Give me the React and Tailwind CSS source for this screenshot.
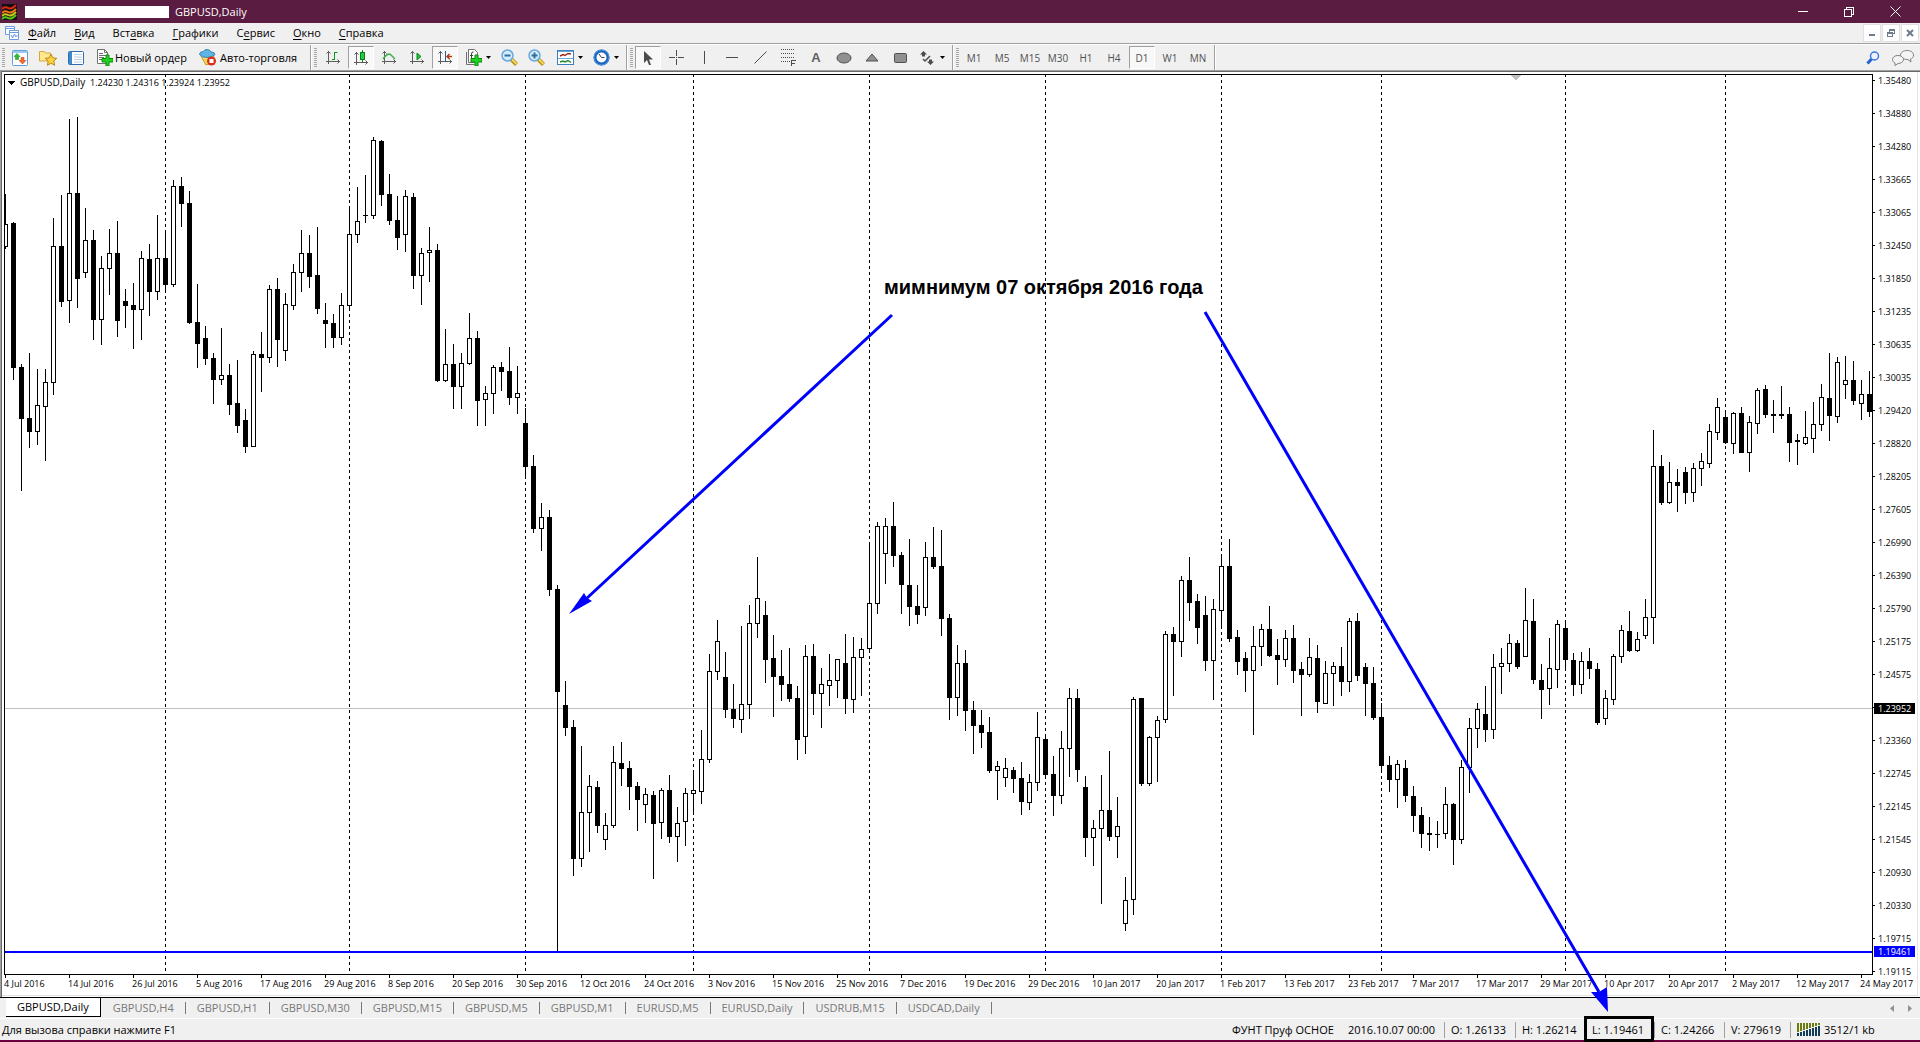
const priceLabels = [
  "1.35480", "1.34880", "1.34280", "1.33665", "1.33065", "1.32450", "1.31850",
  "1.31235", "1.30635", "1.30035", "1.29420", "1.28820", "1.28205", "1.27605",
  "1.26990", "1.26390", "1.25790", "1.25175", "1.24575", null, "1.23360",
  "1.22745", "1.22145", "1.21545", "1.20930", "1.20330", "1.19715", "1.19115",
];

const timeLabels = [
  "4 Jul 2016", "14 Jul 2016", "26 Jul 2016", "5 Aug 2016", "17 Aug 2016",
  "29 Aug 2016", "8 Sep 2016", "20 Sep 2016", "30 Sep 2016", "12 Oct 2016",
  "24 Oct 2016", "3 Nov 2016", "15 Nov 2016", "25 Nov 2016", "7 Dec 2016",
  "19 Dec 2016", "29 Dec 2016", "10 Jan 2017", "20 Jan 2017", "1 Feb 2017",
  "13 Feb 2017", "23 Feb 2017", "7 Mar 2017", "17 Mar 2017", "29 Mar 2017",
  "10 Apr 2017", "20 Apr 2017", "2 May 2017", "12 May 2017", "24 May 2017",
];

const separators = [165, 349, 525, 693, 869, 1045, 1221, 1381, 1565, 1725];

// high, body top, body bottom, low, 1 = bearish
const candles = [
  [194, 224, 247, 249, 0], [222, 223, 368, 380, 1], [364, 367, 419, 491, 1], [353, 418, 432, 448, 1],
  [369, 405, 432, 445, 0], [369, 382, 407, 461, 0], [218, 246, 383, 395, 0], [195, 246, 302, 307, 1],
  [119, 193, 301, 323, 0], [117, 193, 279, 308, 1], [208, 240, 273, 278, 0], [230, 240, 320, 340, 1],
  [256, 268, 320, 345, 0], [229, 253, 269, 295, 0], [221, 253, 321, 337, 1], [289, 301, 306, 328, 1],
  [283, 305, 310, 349, 1], [251, 258, 310, 340, 0], [244, 259, 292, 316, 1], [215, 258, 292, 300, 0],
  [230, 258, 285, 291, 1], [180, 186, 285, 287, 0], [177, 186, 204, 227, 1], [191, 203, 323, 324, 1],
  [284, 322, 344, 368, 1], [326, 338, 359, 365, 1], [353, 358, 380, 404, 1], [328, 375, 380, 385, 0],
  [364, 375, 405, 415, 1], [360, 403, 426, 433, 1], [409, 420, 447, 453, 1], [351, 354, 447, 447, 0],
  [332, 354, 358, 392, 1], [285, 289, 358, 363, 0], [278, 289, 340, 367, 1], [293, 304, 351, 361, 0],
  [264, 272, 306, 310, 0], [230, 253, 273, 292, 0], [235, 253, 277, 288, 1], [227, 275, 309, 314, 1],
  [303, 320, 324, 348, 1], [314, 323, 338, 348, 1], [293, 305, 338, 345, 0], [206, 234, 306, 311, 0],
  [187, 221, 235, 243, 0], [175, 215, 216, 223, 1], [137, 140, 216, 219, 0], [140, 141, 195, 206, 1],
  [174, 194, 221, 225, 1], [196, 220, 238, 250, 1], [190, 196, 235, 252, 0], [193, 197, 276, 289, 1],
  [248, 253, 276, 305, 0], [227, 250, 253, 282, 0], [244, 250, 381, 382, 1], [329, 364, 381, 382, 0],
  [344, 364, 387, 409, 1], [353, 363, 387, 409, 0], [313, 338, 364, 365, 0], [331, 338, 401, 426, 1],
  [386, 393, 400, 426, 0], [365, 367, 394, 414, 0], [362, 367, 372, 391, 1], [347, 371, 398, 405, 1],
  [366, 393, 398, 414, 0], [408, 423, 467, 479, 1], [455, 466, 529, 533, 1], [503, 517, 529, 551, 0],
  [510, 517, 590, 596, 1], [585, 589, 692, 951, 1], [681, 705, 728, 736, 1], [720, 727, 859, 876, 1],
  [746, 812, 859, 867, 0], [775, 786, 813, 852, 0], [781, 787, 826, 833, 1], [813, 825, 840, 850, 0],
  [746, 762, 826, 828, 0], [742, 763, 769, 786, 1], [761, 768, 787, 810, 1], [782, 786, 800, 831, 1],
  [788, 794, 805, 823, 0], [791, 795, 824, 879, 1], [788, 790, 823, 839, 0], [775, 790, 837, 843, 1],
  [807, 823, 837, 862, 0], [788, 793, 822, 846, 0], [771, 790, 794, 815, 0], [730, 759, 792, 804, 0],
  [654, 671, 760, 763, 0], [620, 641, 672, 680, 0], [652, 677, 710, 718, 1], [684, 709, 719, 728, 1],
  [626, 704, 720, 733, 0], [605, 623, 705, 719, 0], [557, 598, 624, 638, 0], [601, 615, 660, 683, 1],
  [635, 658, 677, 717, 1], [650, 676, 685, 701, 1], [648, 684, 699, 702, 1], [686, 698, 740, 760, 1],
  [645, 656, 737, 754, 0], [644, 656, 694, 715, 1], [668, 684, 694, 728, 0], [654, 680, 686, 706, 0],
  [659, 659, 681, 698, 0], [634, 663, 699, 714, 1], [637, 657, 700, 713, 0], [638, 649, 658, 696, 0],
  [542, 603, 649, 652, 0], [522, 526, 604, 614, 0], [518, 526, 554, 584, 0], [502, 526, 556, 567, 1],
  [552, 555, 585, 614, 1], [539, 585, 607, 626, 1], [585, 606, 615, 624, 1], [542, 557, 608, 616, 0],
  [527, 557, 567, 569, 1], [530, 566, 619, 636, 1], [614, 618, 698, 720, 1], [645, 663, 698, 716, 0],
  [650, 663, 711, 731, 1], [701, 710, 726, 754, 1], [710, 725, 733, 748, 1], [717, 732, 771, 773, 1],
  [761, 766, 771, 800, 0], [758, 768, 778, 787, 0], [767, 770, 779, 793, 1], [762, 778, 802, 815, 1],
  [774, 782, 803, 810, 0], [712, 737, 783, 791, 0], [735, 739, 775, 778, 1], [756, 774, 796, 816, 1],
  [731, 748, 796, 804, 0], [688, 698, 749, 777, 0], [689, 698, 770, 782, 1], [776, 787, 838, 857, 1],
  [820, 828, 838, 866, 0], [775, 810, 829, 904, 0], [751, 810, 837, 841, 1], [797, 826, 837, 858, 0],
  [877, 900, 924, 931, 0], [697, 699, 900, 915, 0], [698, 698, 784, 786, 1], [736, 737, 784, 786, 0],
  [716, 720, 738, 782, 0], [631, 634, 720, 723, 0], [627, 634, 642, 696, 1], [576, 580, 642, 657, 0],
  [557, 580, 603, 621, 1], [594, 601, 628, 644, 1], [596, 615, 661, 671, 1], [599, 609, 661, 700, 0],
  [554, 566, 611, 628, 0], [539, 566, 639, 642, 1], [630, 637, 662, 675, 1], [652, 658, 671, 692, 1],
  [626, 646, 671, 735, 0], [624, 629, 647, 666, 0], [606, 629, 656, 657, 1], [639, 655, 660, 685, 1],
  [630, 638, 660, 667, 0], [625, 638, 671, 683, 1], [662, 669, 675, 716, 1], [638, 657, 675, 677, 0],
  [645, 658, 702, 713, 1], [661, 673, 704, 704, 0], [662, 666, 674, 706, 0], [647, 666, 682, 696, 1],
  [618, 621, 682, 692, 0], [613, 621, 676, 681, 1], [663, 667, 684, 716, 1], [667, 683, 718, 720, 1],
  [703, 717, 766, 772, 1], [756, 765, 780, 792, 1], [760, 764, 780, 808, 0], [760, 768, 796, 802, 1],
  [786, 796, 816, 832, 1], [807, 815, 834, 848, 1], [817, 833, 835, 851, 1], [821, 834, 835, 848, 1],
  [787, 804, 834, 839, 0], [803, 804, 840, 865, 1], [760, 767, 840, 844, 0], [718, 728, 768, 793, 0],
  [703, 709, 729, 748, 0], [686, 714, 730, 742, 1], [654, 667, 730, 739, 0], [648, 663, 667, 694, 0],
  [634, 643, 664, 672, 0], [640, 643, 667, 669, 1], [588, 620, 657, 657, 0], [599, 621, 680, 684, 1],
  [664, 680, 690, 719, 1], [638, 668, 689, 705, 0], [620, 624, 670, 688, 0], [621, 628, 660, 670, 1],
  [653, 660, 685, 696, 1], [652, 661, 685, 694, 0], [648, 661, 669, 679, 1], [663, 669, 723, 725, 1],
  [690, 698, 719, 725, 0], [654, 656, 700, 705, 0], [625, 630, 657, 663, 0], [611, 631, 651, 652, 1],
  [632, 639, 651, 652, 0], [599, 617, 636, 639, 0], [430, 466, 618, 644, 0], [455, 466, 503, 505, 1],
  [462, 482, 503, 504, 0], [469, 482, 486, 512, 1], [467, 472, 493, 504, 1], [463, 468, 493, 502, 0],
  [453, 461, 469, 486, 0], [424, 431, 464, 468, 0], [398, 407, 433, 440, 0], [411, 417, 443, 444, 1],
  [412, 413, 444, 454, 0], [407, 413, 453, 453, 1], [416, 422, 453, 472, 0], [388, 390, 424, 434, 0],
  [385, 389, 415, 418, 1], [400, 414, 416, 433, 1], [386, 414, 416, 419, 1], [407, 414, 443, 462, 1],
  [434, 440, 442, 465, 1], [411, 437, 444, 445, 0], [402, 424, 439, 453, 0], [384, 397, 425, 431, 0],
  [353, 398, 416, 441, 1], [357, 362, 417, 423, 0], [356, 380, 385, 399, 0], [361, 380, 401, 405, 1],
  [380, 394, 404, 420, 0], [371, 394, 412, 417, 1],
];

function Candle({ x, data }) {
  const [high, top, bottom, low, down] = data;
  return (
    <g>
      <rect x={x} y={high} width="1" height={low - high} fill="#000" />
      <rect x={x - 2} y={top} width="5" height={bottom - top} fill="#000" />
      {!down && (
        <rect x={x - 1} y={top + 1} width="3" height={bottom - top - 2} fill="#fff" />
      )}
    </g>
  );
}

function Chart() {
  return (
    <svg
      viewBox="2 72 1918 925"
      className="block w-full bg-white font-['Open_Sans',sans-serif] text-[9px]"
      role="img"
      aria-label="GBPUSD,Daily"
    >
      <defs>
        <clipPath id="plot">
          <rect x="5" y="75" width="1867" height="899" />
        </clipPath>
      </defs>
      <g shapeRendering="crispEdges">
        <rect x="1917" y="72" width="1" height="924" fill="#e3e3e3" />
        <rect x="2" y="995" width="1916" height="1" fill="#e3e3e3" />
        <g clipPath="url(#plot)">
          {separators.map((x) => (
            <line key={x} x1={x + 0.5} x2={x + 0.5} y1="74" y2="974" stroke="#000" strokeDasharray="3 3" />
          ))}
          <rect x="5" y="708" width="1867" height="1" fill="#c0c0c0" />
          {candles.map((c, i) => (
            <Candle key={i} x={5 + i * 8} data={c} />
          ))}
          <rect x="5" y="951" width="1867" height="2" fill="#0000ff" />
        </g>
        <path d="M4 74h1869v901H4zM5 75v899h1867V75z" fillRule="evenodd" fill="#000" />
        {priceLabels.map((p, i) => (
          <rect key={i} x="1873" y={80 + i * 33} width="2" height="1" fill="#000" />
        ))}
        {timeLabels.map((t, i) => (
          <rect key={t} x={5 + i * 64} y="975" width="1" height="3" fill="#000" />
        ))}
        <path d="M1510 75h11l-5 5h-1z" fill="#c0c0c0" />
        <path d="M8 81h7l-3 4h-1z" fill="#000" />
        <rect x="1874" y="703" width="41" height="11" fill="#000" />
        <rect x="1874" y="946" width="41" height="11" fill="#0000ff" />
      </g>
      <text x="20" y="86" className="text-[10px]">GBPUSD,Daily</text>
      <text x="90" y="86">1.24230 1.24316 1.23924 1.23952</text>
      {priceLabels.map(
        (p, i) =>
          p && (
            <text key={p} x="1878" y={84 + i * 33}>
              {p}
            </text>
          )
      )}
      {timeLabels.map((t, i) => (
        <text key={t} x={4 + i * 64} y="987">
          {t}
        </text>
      ))}
      <text x="1878" y="712" fill="#fff">1.23952</text>
      <text x="1878" y="955" fill="#fff">1.19461</text>
      <text
        x="884"
        y="294"
        className="font-['Liberation_Sans',sans-serif] text-[20px] font-bold"
      >
        мимнимум 07 октября 2016 года
      </text>
    </svg>
  );
}

function Arrows() {
  return (
    <svg
      viewBox="0 0 1920 1042"
      className="absolute top-0 left-0 w-full pointer-events-none z-10"
      fill="#0000ff"
      stroke="#0000ff"
    >
      <path d="M892 315L586 599M1205 312L1599 992" strokeWidth="3" fill="none" />
      <path d="M569 614L584 593L587 598L592 601Z" stroke="none" />
      <path d="M1608 1012L1591 992L1599 992L1607 987Z" stroke="none" />
    </svg>
  );
}

function TitleBar() {
  return (
    <header className="flex items-center h-[23px] pr-0.5 bg-[#5a1c40] text-white">
      <svg width="15" height="16" viewBox="0 0 15 16" className="ml-0.5">
        <rect width="15" height="16" fill="#111" />
        <g fill="none" strokeWidth="2">
          <path d="M0 5q3-3 6-1t8-3" stroke="#e02a10" />
          <path d="M0 9q3-3 6-1t8-3" stroke="#f07818" />
          <path d="M0 12q3-3 6-1t8-3" stroke="#c8c820" />
          <path d="M0 15q3-3 6-1t8-3" stroke="#58c818" />
        </g>
      </svg>
      <div className="w-36 h-3 ml-2 bg-white" />
      <h1 className="ml-1.5">GBPUSD,Daily</h1>
      <div className="flex ml-auto h-full">
        <button aria-label="Minimize" className="w-[46px] flex items-center justify-center">
          <svg width="10" height="10" shapeRendering="crispEdges">
            <path d="M0 4.500h10" stroke="#fff" />
          </svg>
        </button>
        <button aria-label="Restore" className="w-[46px] flex items-center justify-center">
          <svg width="10" height="10" fill="none" stroke="#fff" shapeRendering="crispEdges">
            <path d="M0.500 2.500h7v7h-7zM2.500 2.500v-2h7v7h-2" />
          </svg>
        </button>
        <button aria-label="Close" className="w-[46px] flex items-center justify-center">
          <svg width="11" height="11" stroke="#fff">
            <path d="M0.500 0.500l10 10M10.500 0.500l-10 10" />
          </svg>
        </button>
      </div>
    </header>
  );
}

const menuItems = [
  ["", "Ф", "айл"],
  ["", "В", "ид"],
  ["Вст", "а", "вка"],
  ["", "Г", "рафики"],
  ["С", "е", "рвис"],
  ["", "О", "кно"],
  ["", "С", "правка"],
];

function MenuBar() {
  return (
    <nav className="flex items-center h-5 text-black">
      <svg width="14" height="14" viewBox="0 0 14 14" className="ml-[5px]" fill="#fff" stroke="#6b9be0">
        <path d="M0.500 0.500h9v8h-9zM0.500 2.500h9" />
        <path d="M4.500 4.500h9v9h-9zM4.500 6.500h9M6 9l1.500 3l2-4l1.500 3l1.500-2" />
      </svg>
      {menuItems.map(([a, key, b]) => (
        <button key={b} className="px-[9px]">
          {a}
          <u className="underline-offset-2">{key}</u>
          {b}
        </button>
      ))}
      <div className="flex ml-auto gap-px pr-px">
        <button aria-label="Minimize chart" className="w-[18px] h-[18px] bg-white border border-[#e0e0e0] flex items-center justify-center">
          <svg width="8" height="8"><path d="M1 5h6v2H1z" fill="#6d7b8c" /></svg>
        </button>
        <button aria-label="Restore chart" className="w-[18px] h-[18px] bg-white border border-[#e0e0e0] flex items-center justify-center">
          <svg width="8" height="8" fill="none" stroke="#6d7b8c" shapeRendering="crispEdges">
            <path d="M0.500 4.500h5v3h-5zM0 3.500h6M2.500 3v-2.500h5v4h-2M2 1.500h6" />
          </svg>
        </button>
        <button aria-label="Close chart" className="w-[18px] h-[18px] bg-white border border-[#e0e0e0] flex items-center justify-center">
          <svg width="8" height="8" stroke="#6d7b8c" strokeWidth="2"><path d="M1 1l6 6M7 1l-6 6" /></svg>
        </button>
      </div>
    </nav>
  );
}

function Grip() {
  return (
    <svg width="3" height="20" className="shrink-0" shapeRendering="crispEdges">
      <path d="M1.500 0v20" stroke="#a8a8a8" strokeWidth="3" strokeDasharray="1 1" />
    </svg>
  );
}

function Divider() {
  return <div className="w-0.5 h-full shrink-0 border-l border-[#a0a0a0] bg-white" />;
}

function DropArrow() {
  return (
    <svg width="5" height="3" className="shrink-0">
      <path d="M0 0h5l-2.500 3z" fill="#000" />
    </svg>
  );
}

function ToolButton({ label, pressed, children }) {
  return (
    <button
      aria-label={label}
      className={`w-[26px] h-[23px] mx-px shrink-0 flex items-center justify-center border ${
        pressed
          ? "bg-[#f8f8f8] border-t-[#a0a0a0] border-l-[#a0a0a0] border-b-white border-r-white"
          : "border-transparent"
      }`}
    >
      {children}
    </button>
  );
}

const axes = "M2.500 0v13M0 10.500h14M0.500 2.500l2-2l2 2M11.500 8.500l2 2l-2 2";

function AxesIcon({ children }) {
  return (
    <svg width="14" height="14" viewBox="0 0 14 14" fill="none">
      <path d={axes} stroke="#5c5c5c" />
      {children}
    </svg>
  );
}

function PlusSign() {
  return (
    <path d="M10 6h3v3.500h4v3.500h-4v4h-3v-4H6V9.500h4z" fill="#1fd41f" stroke="#0a8a0a" />
  );
}

function Lens({ plus }) {
  return (
    <svg width="17" height="17" viewBox="0 0 17 17" fill="none">
      <path d="M10 10l5.500 5.500" stroke="#b88a10" strokeWidth="4" />
      <path d="M10.500 10l5 5" stroke="#f5d860" strokeWidth="2" />
      <circle cx="6.500" cy="6.500" r="5.500" fill="#d4ebfb" stroke="#68a8dc" strokeWidth="1.500" />
      <path d={plus ? "M3.500 6.500h6M6.500 3.500v6" : "M3.500 6.500h6"} stroke="#2f6f9f" strokeWidth="2" />
    </svg>
  );
}

function StandardTools() {
  return (
    <>
      <button aria-label="Обзор рынка" className="ml-[7px] shrink-0">
        <svg width="16" height="16" viewBox="0 0 16 16">
          <rect x="0.500" y="0.500" width="15" height="15" rx="1" fill="#fff" stroke="#5ba0dc" />
          <path d="M1 2h14" stroke="#9cc8ee" strokeWidth="2" />
          <path d="M5 3.500l3 3H6.500v3h-3v-3H2z" fill="#2fc02f" stroke="#128012" strokeWidth="0.500" />
          <path d="M10.500 14l-3.500-3.500h2v-3h3v3h2z" fill="#f07030" stroke="#c03010" strokeWidth="0.500" />
        </svg>
      </button>
      <button aria-label="Навигатор" className="ml-[11px] shrink-0">
        <svg width="18" height="16" viewBox="0 0 18 16">
          <path d="M0.500 1.500h5l1 1.500h5v8h-11z" fill="#ffe890" stroke="#d8a838" />
          <path d="M12 4l1.800 3.800l4 .5l-3 2.800l.8 4.200l-3.600-2l-3.600 2l.8-4.200l-3-2.800l4-.5z" fill="#fcd040" stroke="#b88818" />
        </svg>
      </button>
      <button aria-label="Терминал" className="ml-[11px] shrink-0">
        <svg width="16" height="14" viewBox="0 0 16 14">
          <rect x="0.500" y="0.500" width="15" height="13" rx="1" fill="#fff" stroke="#2f6cb0" />
          <rect x="1" y="1" width="3" height="12" fill="#4088d0" />
          <path d="M6 3.500h8M6 6h8M6 8.500h8M6 11h8" stroke="#b8d0e8" />
        </svg>
      </button>
      <button className="ml-3 flex items-center gap-0.5 shrink-0">
        <svg width="17" height="17" viewBox="0 0 17 17">
          <path d="M1.500 0.500h7l3 3v11h-10z" fill="#fff" stroke="#707070" />
          <path d="M8.500 0.500v3h3M3 4.500h4M3 6.500h7M3 8.500h5M3 10.500h3" stroke="#707070" fill="none" />
          <PlusSign />
        </svg>
        Новый ордер
      </button>
      <button className="ml-3 flex items-center gap-1 shrink-0">
        <svg width="17" height="17" viewBox="0 0 17 17">
          <path d="M2 7l6-2l7 2l-3 7l-5 2z" fill="#f8d858" stroke="#c09828" />
          <path d="M0.500 5.500q0-3 4-3q1-2.500 4-2t3.500 2.500q4 0 4 2.500q-3 3-8 3t-7.500-3z" fill="#60b4e4" stroke="#3484b8" />
          <circle cx="12.500" cy="12" r="4.500" fill="#d83018" />
          <rect x="10.500" y="10" width="4" height="4" fill="#fff" />
        </svg>
        Авто-торговля
      </button>
    </>
  );
}

function ChartTools() {
  return (
    <>
      <ToolButton label="Бары">
        <AxesIcon><path d="M8.500 1v7M8.500 1.500h3M6 8.500h3" stroke="#0a9a1a" /></AxesIcon>
      </ToolButton>
      <ToolButton label="Свечи" pressed>
        <svg width="14" height="16" viewBox="0 0 14 16" fill="none">
          <path d="M2.500 2v13M0 12.500h14M0.500 4.500l2-2l2 2M11.500 10.500l2 2l-2 2" stroke="#5c5c5c" />
          <path d="M8.500 0v12" stroke="#0a7a1a" />
          <rect x="6.500" y="2.500" width="4" height="7" fill="#1fd03f" stroke="#0a7a1a" />
        </svg>
      </ToolButton>
      <ToolButton label="Линия">
        <AxesIcon><path d="M1 8q5-7 8-4l4 4" stroke="#3cae4c" strokeWidth="1.500" /></AxesIcon>
      </ToolButton>
      <ToolButton label="Автопрокрутка">
        <AxesIcon><path d="M7 2l4 3.500l-4 3.500z" fill="#1fc03f" stroke="#0a8a1a" /></AxesIcon>
      </ToolButton>
      <ToolButton label="Сдвиг графика" pressed>
        <AxesIcon>
          <path d="M7.500 0v10" stroke="#2060a0" />
          <path d="M9 5.500h5M11.500 3l-2.500 2.500l2.500 2.500" stroke="#b03a10" strokeWidth="1.500" />
        </AxesIcon>
      </ToolButton>
      <button aria-label="Индикаторы" className="ml-1.5 flex items-center gap-1">
        <svg width="17" height="17" viewBox="0 0 17 17">
          <path d="M3.500 0.500h6l3 3v10h-9z" fill="#fff" stroke="#707070" />
          <path d="M1.500 3v12.500h8" fill="none" stroke="#707070" />
          <path d="M8.500 3q-2-.5-2 2v6M5 6.500h3" fill="none" stroke="#404040" />
          <PlusSign />
        </svg>
        <DropArrow />
      </button>
      <button aria-label="Уменьшить" className="ml-2.5"><Lens /></button>
      <button aria-label="Увеличить" className="ml-2.5"><Lens plus /></button>
      <button aria-label="Шаблоны" className="ml-3 flex items-center gap-1">
        <svg width="17" height="15" viewBox="0 0 17 15" fill="none">
          <rect x="0.500" y="0.500" width="16" height="14" fill="#fff" stroke="#3c80c0" />
          <path d="M1 1.500h15M1 8.500h15" stroke="#68a8dc" />
          <path d="M3 6l3-1.500l2 1l3-2l3 .5" stroke="#a02818" strokeWidth="1.500" />
          <path d="M3 12l3-1l2 1l3-1.500l3 2" stroke="#208c30" strokeWidth="1.500" />
        </svg>
        <DropArrow />
      </button>
      <button aria-label="Период" className="ml-2.5 mr-1 flex items-center gap-1">
        <svg width="17" height="17" viewBox="0 0 17 17" fill="none">
          <circle cx="8.500" cy="8.500" r="6.500" fill="#fff" stroke="#1c64c0" strokeWidth="3" />
          <circle cx="8.500" cy="8.500" r="7.500" stroke="#5098e0" />
          <path d="M8.500 8.500l-2.500-3.500M8.500 8.500h3" stroke="#404040" />
        </svg>
        <DropArrow />
      </button>
    </>
  );
}

function LineTools() {
  return (
    <>
      <ToolButton label="Курсор" pressed>
        <svg width="10" height="16" viewBox="0 0 10 16">
          <path d="M1 1v12l3-3l2 5h2l-2-5.500h4z" fill="#4c4c4c" />
        </svg>
      </ToolButton>
      <ToolButton label="Перекрестие">
        <svg width="15" height="15" stroke="#4c4c4c" shapeRendering="crispEdges">
          <path d="M7.500 0v6M7.500 9v6M0 7.500h6M9 7.500h6M7 7.500h1" />
        </svg>
      </ToolButton>
      <ToolButton label="Вертикальная линия">
        <svg width="3" height="13" stroke="#4c4c4c" shapeRendering="crispEdges"><path d="M1.500 0v13" /></svg>
      </ToolButton>
      <ToolButton label="Горизонтальная линия">
        <svg width="12" height="3" stroke="#4c4c4c" shapeRendering="crispEdges"><path d="M0 1.500h12" /></svg>
      </ToolButton>
      <ToolButton label="Трендовая линия">
        <svg width="13" height="13" stroke="#4c4c4c"><path d="M0.500 12.500l12-12" /></svg>
      </ToolButton>
      <ToolButton label="Уровни Фибоначчи">
        <svg width="15" height="17" fill="none" stroke="#4c4c4c" shapeRendering="crispEdges">
          <path d="M0 0.500h14M0 4.500h14M0 8.500h14M0 12.500h9" strokeDasharray="1 1" />
          <path d="M10.500 17v-5.500h4M10 14.500h4" />
        </svg>
      </ToolButton>
      <ToolButton label="Текст">
        <span className="font-['Liberation_Sans',sans-serif] text-[13px] leading-none font-bold text-[#606060]">A</span>
      </ToolButton>
      <ToolButton label="Эллипс">
        <svg width="16" height="12"><ellipse cx="8" cy="6" rx="7" ry="5" fill="#909090" stroke="#505050" /></svg>
      </ToolButton>
      <ToolButton label="Треугольник">
        <svg width="14" height="9"><path d="M7 1l6 7H1z" fill="#909090" stroke="#505050" /></svg>
      </ToolButton>
      <ToolButton label="Прямоугольник">
        <svg width="13" height="10"><rect x="0.500" y="0.500" width="12" height="9" rx="1" fill="#909090" stroke="#505050" /></svg>
      </ToolButton>
      <button aria-label="Стрелки" className="mx-1.5 flex items-center gap-1.5">
        <svg width="14" height="14" viewBox="0 0 14 14">
          <path d="M3.500 0L7 3.500H5v2H2v-2H0zM10.500 14L7 10.500h2v-2h3v2h2z" fill="#4c4c4c" />
          <path d="M3 8l2 2l5-5" fill="none" stroke="#4c4c4c" strokeWidth="1.500" />
        </svg>
        <DropArrow />
      </button>
    </>
  );
}

const periods = ["M1", "M5", "M15", "M30", "H1", "H4", "D1", "W1", "MN"];

function Toolbar() {
  return (
    <div className="flex items-center h-[25px] pl-0.5 text-black">
      <Grip />
      <div className="flex items-center w-[305px] shrink-0">
        <StandardTools />
      </div>
      <Divider />
      <div className="w-0.5" />
      <Grip />
      <div className="flex items-center w-[309px] shrink-0 pl-0.5">
        <ChartTools />
      </div>
      <Divider />
      <div className="w-0.5" />
      <Grip />
      <div className="flex items-center w-[319px] shrink-0 pl-px">
        <LineTools />
      </div>
      <Divider />
      <div className="w-0.5" />
      <Grip />
      <div className="flex items-center w-[255px] shrink-0 pl-px">
        {periods.map((p) => (
          <ToolButton key={p} label={p} pressed={p === "D1"}>
            <span className="text-[10px] leading-none text-[#505050]">{p}</span>
          </ToolButton>
        ))}
      </div>
      <Divider />
      <div className="flex items-center ml-auto gap-3 pr-1.5">
        <button aria-label="Поиск">
          <svg width="14" height="14" fill="none">
            <path d="M5.500 8L1.500 12.500" stroke="#2060d0" strokeWidth="3" />
            <circle cx="8.500" cy="5" r="4" fill="#eef4ff" stroke="#3c78e0" strokeWidth="1.500" />
          </svg>
        </button>
        <button aria-label="Чат">
          <svg width="22" height="16" fill="#f4f4f4" stroke="#808080">
            <path d="M15 0.500c4 0 6.500 2 6.500 4.500s-1.500 3.500-3 4l.500 3l-3-2.500c-5 0-7.500-2-7.500-4.500s3-4.500 6.500-4.500z" />
            <path d="M6 5.500c3 0 5.500 1.500 5.500 4s-3 4-5.500 4l-3 2v-2.500c-1.500-.5-2.500-2-2.500-3.500c0-2.500 2.500-4 5.500-4z" />
          </svg>
        </button>
      </div>
    </div>
  );
}

const tabs = [
  "GBPUSD,Daily", "GBPUSD,H4", "GBPUSD,H1", "GBPUSD,M30", "GBPUSD,M15", "GBPUSD,M5",
  "GBPUSD,M1", "EURUSD,M5", "EURUSD,Daily", "USDRUB,M15", "USDCAD,Daily",
];

function ChartTabs() {
  return (
    <div className="flex items-center h-[21px] pl-1.5 border-t border-black text-[#787878]">
      {tabs.map((t, i) =>
        i === 0 ? (
          <button key={t} className="self-start h-[19px] px-[11px] mr-px bg-white text-black border-r border-b border-black">
            {t}
          </button>
        ) : (
          <button key={t} className="h-3 px-[11px] leading-3 border-r border-[#787878]">
            {t}
          </button>
        )
      )}
      <div className="flex ml-auto gap-3.5 pr-2">
        <button aria-label="Назад"><svg width="4" height="7"><path d="M4 0v7L0 3.500z" fill="#909090" /></svg></button>
        <button aria-label="Вперед"><svg width="4" height="7"><path d="M0 0v7l4-3.500z" fill="#909090" /></svg></button>
      </div>
    </div>
  );
}

function StatusBar() {
  return (
    <footer className="flex items-center h-[22px] pl-0.5 border-t border-white text-black">
      <span>Для вызова справки нажмите F1</span>
      <div className="flex items-center ml-auto h-4">
        <span className="w-[116px]">ФУНТ Пруф ОСНОЕ</span>
        <span className="w-24">2016.10.07 00:00</span>
        <span className="w-[71px] pl-1.5 border-l border-[#a0a0a0]">O: 1.26133</span>
        <span className="w-[71px] pl-1.5 border-l border-[#a0a0a0]">H: 1.26214</span>
        <span className="relative w-[68px] pl-1.5">
          L: 1.19461
          <span className="absolute -left-0.5 -top-1.5 w-[70px] h-[26px] border-[3px] border-black" />
        </span>
        <span className="w-[70px] pl-1.5 border-l border-[#a0a0a0]">C: 1.24266</span>
        <span className="w-[66px] pl-1.5 border-l border-[#a0a0a0]">V: 279619</span>
        <span className="w-[130px] pl-1.5 border-l border-[#a0a0a0] flex items-center gap-1">
          <svg width="23" height="13" shapeRendering="crispEdges">
            {[0, 1, 2, 3, 4, 5, 6, 7].map((i) => (
              <g key={i}>
                <rect x={i * 3} y="0" width="2" height={9 - i} fill="#6b7c10" />
                <rect x={i * 3} y={10 - i} width="2" height={3 + i} fill="#103c58" />
              </g>
            ))}
          </svg>
          3512/1 kb
        </span>
      </div>
    </footer>
  );
}

export default function App() {
  return (
    <div className="relative flex flex-col min-h-screen bg-[#6b0040] font-['Open_Sans','Noto_Sans',sans-serif] text-[11px] leading-4 whitespace-nowrap">
      <TitleBar />
      <div className="bg-[#f0f0f0]">
        <MenuBar />
        <div className="h-0.5 border-t border-[#a0a0a0] bg-white" />
        <Toolbar />
        <main className="border-t border-l border-[#a0a0a0]">
          <div className="border-t border-l border-[#696969]">
            <Chart />
          </div>
        </main>
        <ChartTabs />
        <StatusBar />
      </div>
      <Arrows />
    </div>
  );
}
